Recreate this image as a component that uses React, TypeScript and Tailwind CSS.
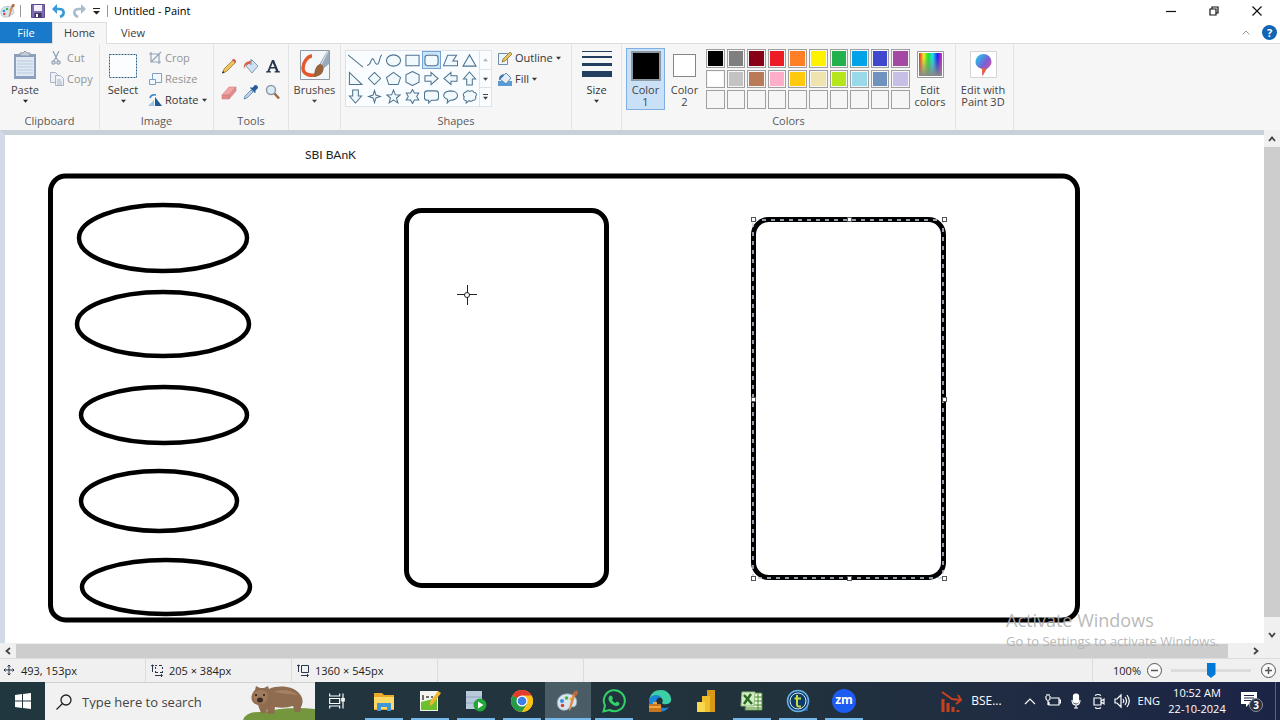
import type { ReactNode } from "react";
import clsx from "clsx";

const swatches = [
  "bg-black",
  "bg-[#7f7f7f]",
  "bg-[#880015]",
  "bg-[#ed1c24]",
  "bg-[#ff7f27]",
  "bg-[#fff200]",
  "bg-[#22b14c]",
  "bg-[#00a2e8]",
  "bg-[#3f48cc]",
  "bg-[#a349a4]",
  "bg-white",
  "bg-[#c3c3c3]",
  "bg-[#b97a57]",
  "bg-[#ffaec9]",
  "bg-[#ffc90e]",
  "bg-[#efe4b0]",
  "bg-[#b5e61d]",
  "bg-[#99d9ea]",
  "bg-[#7092be]",
  "bg-[#c8bfe7]",
];

const shapes = [
  { name: "Line", d: "M0 2l16 13" },
  { name: "Curve", d: "M0 13c4 1 4-7 6-7s2 7 5 6s2-9 5-10" },
  { name: "Oval", d: "M.5 8a7.500 6 0 1 0 15 0a7.500 6 0 1 0-15 0z" },
  { name: "Rectangle", d: "M1 2.500h14v11h-14z" },
  { name: "Rounded rectangle", d: "M4 2.500h8q3 0 3 3v5q0 3-3 3H4q-3 0-3-3v-5q0-3 3-3z" },
  { name: "Polygon", d: "M5 2.500h9.500l-4 6h5v5H.5z" },
  { name: "Triangle", d: "M8 2L15 14H1z" },
  { name: "Right triangle", d: "M1.500 1.500v13h13.500z" },
  { name: "Diamond", d: "M8 1.500L14.500 8L8 14.500L1.500 8z" },
  { name: "Pentagon", d: "M8 1.500L15.500 7l-2.500 7.500H3L.5 7z" },
  { name: "Hexagon", d: "M8 .5l7 3.500v8l-7 3.500L1 12V4z" },
  { name: "Right arrow", d: "M1 5h6.500V1.500L15 8l-7.500 6.500V11H1z" },
  { name: "Left arrow", d: "M15 5H8.500V1.500L1 8l7.500 6.500V11H15z" },
  { name: "Up arrow", d: "M5 15V8.500H1.500L8 1l6.500 7.500H11V15z" },
  { name: "Down arrow", d: "M5 1v6.500H1.500L8 15l6.500-7.500H11V1z" },
  { name: "Four-point star", d: "M8 1.500l1.500 5l5 1.500l-5 1.500l-1.500 5l-1.500-5l-5-1.500l5-1.500z" },
  { name: "Five-point star", d: "M8 1l2 5.200l5.200.2l-4 3.200l1.500 5.200L8 11.800l-4.700 3l1.500-5.200l-4-3.200L6 6.200z" },
  { name: "Six-point star", d: "M8 .5l2 3.700h4.700L12.500 8l2.200 3.800H10l-2 3.700l-2-3.700H1.300L3.500 8L1.300 4.200H6z" },
  { name: "Rounded callout", d: "M4 2h8.500q3 0 3 3v4q0 3-3 3H8l-3 3v-3H3.500q-3 0-3-3V5q0-3 3-3z" },
  { name: "Oval callout", d: "M4.500 15l.5-4C-1.500 9-.5 2.500 8 2c10 0 10 10 0 10q-2 1-3.500 3z" },
  { name: "Cloud callout", d: "M4 3.500c1-2 3-2 4-1c2-1 4-1 4.500 1c3 0 3.500 3 2 4.500c1 2-1 4.500-3 4c-1 1.500-3 1-4 0.500l-3 2.500v-2.500c-2.500 0-3.500-2.500-2-4c-2-1.500-1-5 1.500-5z" },
];

const ellipses = [
  { cx: 158, cy: 103, rx: 84, ry: 33 },
  { cx: 158, cy: 189, rx: 86, ry: 32 },
  { cx: 159, cy: 280, rx: 83, ry: 28 },
  { cx: 154, cy: 366, rx: 78, ry: 30 },
  { cx: 161, cy: 452, rx: 84, ry: 27 },
];

const handles = [
  [748, 85],
  [844, 85],
  [939, 85],
  [748, 265],
  [939, 265],
  [748, 444],
  [844, 444],
  [939, 444],
];

const Caret = ({ className }: { className?: string }) => (
  <svg viewBox="0 0 6 4" className={clsx("w-[5px] h-1 shrink-0", className)}>
    <path d="M0 .5h6L3 4z" fill="currentColor" />
  </svg>
);

const Palette = ({ className }: { className?: string }) => (
  <svg viewBox="0 0 24 24" className={className}>
    <path d="M1.500 16C0 9 6 4 13 5c7 1 9 7 7 11c-1 3-5 1-7 3c-1 3-10 4-11.500-3z" fill="#d7e6ee" stroke="#8ca9b8" strokeWidth="0.8" />
    <circle cx="6" cy="12" r="2" fill="#3a8fd8" />
    <circle cx="10.500" cy="9" r="1.800" fill="#4caf50" />
    <circle cx="15" cy="10" r="1.600" fill="#f2b52c" />
    <circle cx="6.500" cy="16.500" r="1.800" fill="#d9412f" />
    <path d="M20 4l-5 16l-2 2v-3l4-15z" fill="#d98a4e" />
    <path d="M17 5c0-3 3-4 5-3c0 3-1 5-3 5z" fill="#b9683a" />
  </svg>
);

const Group = ({ label, className, children }: { label?: string; className: string; children: ReactNode }) => (
  <section className={clsx("flex flex-col shrink-0 border-r border-[#e2e3e4]", className)}>
    <div className="flex flex-1 pt-1">{children}</div>
    <div className="h-[17px] leading-4 text-center text-[#5a5a5a]">{label}</div>
  </section>
);

const SmallButton = ({ label, icon, dim, caret }: { label: string; icon: ReactNode; dim?: boolean; caret?: boolean }) => (
  <button className={clsx("flex items-center gap-[3px] h-5 whitespace-nowrap", dim ? "text-[#939393]" : "text-[#333]")}>
    <svg viewBox="0 0 14 14" className="w-3.5 h-3.5 shrink-0">
      {icon}
    </svg>
    {label}
    {caret && <Caret />}
  </button>
);

const TitleBar = () => (
  <header className="flex items-center h-[22px] pr-0.5 text-black">
    <Palette className="w-4 h-4" />
    <span className="w-px h-3 ml-1 bg-[#999]" />
    <button aria-label="Save" className="ml-2.5">
      <svg viewBox="0 0 14 14" className="w-3.5 h-3.5">
        <path d="M.5.5h13v13H.5z" fill="#7f6bb0" stroke="#5e4c90" />
        <path d="M3 1h8v6H3z" fill="#f1eff8" />
        <path d="M3.500 9h7v4.500h-7z" fill="#3e3560" />
        <path d="M5 10h2v3H5z" fill="#fff" />
      </svg>
    </button>
    <button aria-label="Undo" className="ml-[7px]">
      <svg viewBox="0 0 14 14" className="w-3.5 h-3.5" fill="none">
        <path d="M2 5h5c6 0 6 6 1 8" stroke="#3a9ad9" strokeWidth="2.600" />
        <path d="M0 5l5-5v10z" fill="#3a9ad9" />
      </svg>
    </button>
    <button aria-label="Redo" className="ml-1.5">
      <svg viewBox="0 0 14 14" className="w-3.5 h-3.5" fill="none">
        <path d="M12 5H7c-6 0-6 6-1 8" stroke="#a9bccb" strokeWidth="2.600" />
        <path d="M14 5L9 0v10z" fill="#a9bccb" />
      </svg>
    </button>
    <button aria-label="Customize Quick Access Toolbar" className="ml-[7px]">
      <svg viewBox="0 0 7 7" className="w-[7px] h-[7px]">
        <path d="M0 0h7v1H0zM0 3h7L3.500 6.500z" fill="#222" />
      </svg>
    </button>
    <span className="w-px h-3 ml-[7px] bg-[#999]" />
    <h1 className="ml-1.5">Untitled - Paint</h1>
    <div className="flex ml-auto">
      {[
        ["Minimize", "M0 5.500h10"],
        ["Restore", "M1 3h6v6H1zM3 3V1h6v6H7"],
        ["Close", "M.500.500l9 9M9.500.500l-9 9"],
      ].map(([name, d]) => (
        <button key={name} aria-label={name} className="flex items-center justify-center w-[43px] h-5">
          <svg viewBox="0 0 10 10" className="w-2.5 h-2.5" fill="none" stroke="#111" strokeWidth="1.200">
            <path d={d} />
          </svg>
        </button>
      ))}
    </div>
  </header>
);

const Tabs = () => (
  <nav className="flex h-[22px] border-b border-[#dcdddf] text-[#3c3c3c]">
    <button className="w-[52px] h-[21px] bg-[#1979ca] text-white">File</button>
    <button className="w-[55px] h-[22px] pb-0.5 bg-[#f6f6f6] border-x border-t border-[#dcdddf]">Home</button>
    <button className="w-[52px] h-[21px]">View</button>
    <div className="flex items-center gap-3 ml-auto pr-[3px]">
      <button aria-label="Minimize the Ribbon">
        <svg viewBox="0 0 8 5" className="w-2 h-[5px]" fill="none" stroke="#999">
          <path d="M.5 4.500L4 1l3.500 3.500" />
        </svg>
      </button>
      <button aria-label="Help" className="w-[15px] h-[15px] rounded-full bg-[#1264b4] text-white font-bold leading-[15px]">
        ?
      </button>
    </div>
  </nav>
);

const toolIcons = [
  {
    name: "Pencil",
    art: (
      <>
        <path d="M1.500 15l1.500-4L12 2l2.500 2.500L5.500 13.500z" fill="#f0c25a" stroke="#96753a" strokeWidth="0.8" />
        <path d="M11 2l3 3l1-1q0-3-3-3z" fill="#d9534f" />
        <path d="M1 15.500l1-2.500l1.500 1.500z" fill="#222" />
      </>
    ),
  },
  {
    name: "Fill with color",
    art: (
      <>
        <path d="M3 8l6-6l6 6l-6 7z" fill="#cfe0f0" stroke="#7f9fc0" />
        <path d="M8 7V1" stroke="#5f87b0" />
        <path d="M8 3C4 3 0 5 1 11c1-4 3-5 6-5z" fill="#e0603c" />
      </>
    ),
  },
  {
    name: "Text",
    art: <path d="M1 14.500v-1l1.500-.5L7 2h2l4.500 11l1.500.5v1H9.500v-1l1.500-.5l-1-2.500H5.500L4.500 13l1.500.5v1zM6 9h3.500L7.700 4.800z" fill="#27364d" />,
  },
  {
    name: "Eraser",
    art: (
      <>
        <path d="M1 11l7-8h7l-7 8z" fill="#f3a5a5" stroke="#c98080" strokeWidth="0.600" />
        <path d="M1 11h7v4H1zM8 11l7-8v4l-7 8z" fill="#e58a8a" stroke="#c98080" strokeWidth="0.600" />
      </>
    ),
  },
  {
    name: "Color picker",
    art: (
      <>
        <path d="M1 15l1-3l6-6l2 2l-6 6z" fill="#b7d4ea" stroke="#5b82a6" strokeWidth="0.8" />
        <path d="M7 4l5 5l1-1l-1-1l3-3q0-3-3-3L9 4L8 3z" fill="#245b9c" />
      </>
    ),
  },
  {
    name: "Magnifier",
    art: (
      <>
        <path d="M9.500 9.500L14 14.500" stroke="#9b6a43" strokeWidth="2.500" />
        <circle cx="6" cy="6" r="4.500" fill="#dcebf5" stroke="#8e9aa5" strokeWidth="1.500" />
      </>
    ),
  },
];

const Ribbon = () => (
  <div className="flex h-[86px] bg-[#f6f6f6] text-[#444]">
    <Group label="Clipboard" className="w-[100px]">
      <button className="flex flex-col items-center w-[50px]">
        <svg viewBox="0 0 24 30" className="w-6 h-[30px] mt-0.5">
          <path d="M1 4h22v25H1z" fill="#8ba0bd" />
          <path d="M3 7h18v19H3z" fill="#dfe8f3" />
          <path d="M4 11h16M4 14h16M4 17h16M4 20h16M4 23h16" stroke="#b9cade" />
          <path d="M7 6V3h3l2-2l2 2h3v3z" fill="#c7d0da" stroke="#8595a8" />
        </svg>
        <span className="mt-[3px] mb-0.5">Paste</span>
        <Caret className="text-[#222]" />
      </button>
      <div className="flex flex-col gap-px">
        <SmallButton
          dim
          label="Cut"
          icon={<path d="M3 0l4 8l2 3M9 0L5 8l-2 3M2 12a1.500 1.500 0 1 0 3-1a1.500 1.500 0 1 0-3 1M7 12a1.500 1.500 0 1 0 3-1a1.500 1.500 0 1 0-3 1" fill="none" stroke="#94a3b8" strokeWidth="1.300" />}
        />
        <SmallButton
          dim
          label="Copy"
          icon={
            <g fill="#eef2f7" stroke="#a8b4c6">
              <path d="M.5.500h5l2 2v8h-7z" />
              <path d="M5.500 3.500h5l3 3v7h-8zM7 8h4M7 10h5M7 12h5" />
            </g>
          }
        />
      </div>
    </Group>

    <Group label="Image" className="w-[114px] text-[#333]">
      <button className="flex flex-col items-center w-[46px]">
        <svg viewBox="0 0 28 24" className="w-7 h-6 mt-1.5">
          <path d="M.5.500h27v23H.5z" fill="#fcfdff" stroke="#2f6288" strokeDasharray="2 1" />
        </svg>
        <span className="mt-[5px] mb-0.5">Select</span>
        <Caret />
      </button>
      <div className="flex flex-col gap-px ml-0.5">
        <SmallButton dim label="Crop" icon={<path d="M3 1v10h10M1 3h10v10M3 11L13 1" fill="none" stroke="#94a3b8" strokeWidth="1.200" />} />
        <SmallButton
          dim
          label="Resize"
          icon={
            <g fill="#f2f7fc" stroke="#7f9fc4">
              <path d="M4.500 1.500h9v9h-9z" />
              <path d="M1.500 7.500h6v5h-6z" />
            </g>
          }
        />
        <SmallButton
          caret
          label="Rotate"
          icon={
            <>
              <path d="M0 13h6V7z" fill="#9cc5e4" />
              <path d="M7 13V4l7 9z" fill="#1e5a94" />
              <path d="M2 5q1-4 6-3" fill="none" stroke="#3b86c6" strokeWidth="1.500" />
            </>
          }
        />
      </div>
    </Group>

    <Group label="Tools" className="w-[75px]">
      <div className="grid grid-cols-3 gap-x-1.5 gap-y-2.5 content-start pl-[7px] pt-2.5">
        {toolIcons.map((tool) => (
          <button key={tool.name} aria-label={tool.name} className="w-4 h-4">
            <svg viewBox="0 0 16 16" className="w-4 h-4">
              {tool.art}
            </svg>
          </button>
        ))}
      </div>
    </Group>

    <Group className="w-[52px]">
      <button className="flex flex-col items-center w-full">
        <svg viewBox="0 0 30 30" className="w-[30px] h-[30px] mt-0.5">
          <path d="M.5.500h29v29H.5z" fill="#f4f7fa" stroke="#8e9aa8" />
          <path d="M12 6C8 6 3 12 3 18c0 7 8 8 13 7" fill="none" stroke="#e2592d" strokeWidth="3.500" />
          <path d="M29 1v13l-6 5l-4-4L27 1z" fill="#9aaabb" />
          <path d="M28 1l-7 14" stroke="#e4ebf2" />
          <path d="M23 16c2 6-2 10-9 11c0-6 2-13 7-13z" fill="#97643d" />
        </svg>
        <span className="mt-[3px] mb-0.5">Brushes</span>
        <Caret />
      </button>
    </Group>

    <Group label="Shapes" className="w-[231px]">
      <div className="flex h-[57px] mt-0.5 ml-1 border border-[#dfe3e8] bg-[#fafdff]">
        <div className="grid grid-cols-7 w-[133px]">
          {shapes.map((shape, i) => (
            <button
              key={shape.name}
              aria-label={shape.name}
              className={clsx("flex items-center justify-center border", i === 4 ? "border-[#6fa4dc] bg-[#cfe3f7]" : "border-transparent")}
            >
              <svg viewBox="0 0 16 16" className="w-[15px] h-[15px]" fill="#f2f9fd" stroke="#4d738e" strokeWidth="1.100">
                <path d={shape.d} fill={i < 2 ? "none" : undefined} />
              </svg>
            </button>
          ))}
        </div>
        <div className="flex flex-col w-3 border-l border-[#dfe3e8] divide-y divide-[#dfe3e8]">
          <button aria-label="Scroll up" className="flex flex-1 items-center justify-center text-[#b5b5b5]">
            <Caret className="rotate-180" />
          </button>
          <button aria-label="Scroll down" className="flex flex-1 items-center justify-center">
            <Caret />
          </button>
          <button aria-label="More shapes" className="flex flex-col flex-1 items-center justify-center gap-px">
            <span className="w-[5px] h-px bg-[#444]" />
            <Caret />
          </button>
        </div>
      </div>
      <div className="flex flex-col gap-px ml-1.5 text-[#333]">
        <SmallButton
          caret
          label="Outline"
          icon={
            <>
              <path d="M.5 2.500h9v11h-9z" fill="#eef5fb" stroke="#6c8dad" />
              <path d="M4 11l1-3l7-7l2 2l-7 7z" fill="#e9c35c" stroke="#8c733c" strokeWidth="0.8" />
            </>
          }
        />
        <SmallButton
          caret
          label="Fill"
          icon={
            <>
              <path d="M0 9h14v5H0z" fill="#5b9bd5" />
              <path d="M2 7l6-6l5 5l-5 6z" fill="#e3edf6" stroke="#5f87b0" />
              <path d="M6 2Q0 3 1 9q1-3 4-4z" fill="#3c78b4" />
            </>
          }
        />
      </div>
    </Group>

    <Group className="w-[50px] text-[#333]">
      <button className="flex flex-col items-center w-full">
        <svg viewBox="0 0 30 26" className="w-[30px] h-[26px] mt-[3px]">
          <path d="M0 0h30v1H0zM0 5h30v2H0zM0 12h30v3H0zM0 20h30v6H0z" fill="#233f5f" />
        </svg>
        <span className="mt-1.5 mb-0.5">Size</span>
        <Caret />
      </button>
    </Group>

    <Group label="Colors" className="w-[334px]">
      <button className="flex flex-col items-center w-[39px] h-[62px] ml-1 pt-0.5 border border-[#7fb0e4] bg-[#c9e0f7] leading-3">
        <span className="w-[30px] h-[30px] mb-[3px] border-2 border-[#8d98a5] bg-black" />
        Color
        <br />1
      </button>
      <button className="flex flex-col items-center w-[39px] h-[62px] pt-1.5 leading-3">
        <span className="w-[23px] h-[23px] mb-[7px] border border-[#868686] bg-white" />
        Color
        <br />2
      </button>
      <div className="grid grid-cols-10 grid-rows-3 gap-0.5 w-[204px] h-[60px] mt-px ml-0.5">
        {Array.from({ length: 30 }, (_, i) => (
          <button key={i} aria-label={`Color ${i + 1}`} className="border border-[#a0a0a0] p-px">
            <span className={clsx("block w-full h-full", swatches[i])} />
          </button>
        ))}
      </div>
      <button className="flex flex-col items-center w-10 pt-[3px] leading-3">
        <svg viewBox="0 0 27 27" className="w-[27px] h-[27px] mb-1.5">
          <defs>
            <linearGradient id="hue">
              <stop offset="0" stopColor="#e22" />
              <stop offset="0.200" stopColor="#ee2" />
              <stop offset="0.400" stopColor="#2d3" />
              <stop offset="0.600" stopColor="#2de" />
              <stop offset="0.800" stopColor="#22e" />
              <stop offset="1" stopColor="#e2b" />
            </linearGradient>
            <linearGradient id="fade" x2="0" y2="1">
              <stop offset="0.200" stopColor="#888" stopOpacity="0" />
              <stop offset="1" stopColor="#888" />
            </linearGradient>
          </defs>
          <path d="M.5.500h26v26H.5z" fill="#fff" stroke="#999" />
          <path d="M2 2h23v23H2z" fill="url(#hue)" />
          <path d="M2 2h23v23H2z" fill="url(#fade)" />
        </svg>
        Edit
        <br />
        colors
      </button>
    </Group>

    <Group className="w-[58px]">
      <button className="flex flex-col items-center w-[54px] pt-[3px] leading-3 whitespace-nowrap">
        <svg viewBox="0 0 27 27" className="w-[27px] h-[27px] mb-1.5">
          <defs>
            <linearGradient id="drop" x2="1" y2="1">
              <stop offset="0.100" stopColor="#25c3ee" />
              <stop offset="0.500" stopColor="#7a5fd6" />
              <stop offset="0.900" stopColor="#f0508c" />
            </linearGradient>
          </defs>
          <path d="M.5.500h26v26H.5z" fill="#fff" stroke="#d4d4d4" />
          <path d="M13.500 3a8 8 0 0 1 8 8c0 5-5 6-6 9l-3 5l-.5-7c-3-1-6.500-3-6.500-7a8 8 0 0 1 8-8z" fill="url(#drop)" />
          <path d="M12 17l4 1l-3.500 7z" fill="#f0642d" />
        </svg>
        Edit with
        <br />
        Paint 3D
      </button>
    </Group>
  </div>
);

const Arrow = ({ label, turn }: { label: string; turn?: string }) => (
  <button aria-label={label} className="flex items-center justify-center w-4 h-4 shrink-0">
    <svg viewBox="0 0 8 8" className={clsx("w-2 h-2", turn)} fill="none" stroke="#444" strokeWidth="1.800">
      <path d="M1 6l3-3.500L7 6" />
    </svg>
  </button>
);

const Canvas = () => (
  <main className="flex flex-1 min-h-0">
    <div className="flex flex-1 min-w-0 border-t-[5px] border-l-[5px] border-t-[#c8d0da] border-l-[#d3d9e9]">
      <div className="relative flex-1 overflow-hidden bg-white">
        <svg className="w-full h-full" fill="none" stroke="#000" strokeWidth="5">
          <rect x="45.500" y="41" width="1027" height="444" rx="15" />
          {ellipses.map((e) => (
            <ellipse key={e.cy} {...e} strokeWidth="4.500" />
          ))}
          <rect x="401.500" y="75.500" width="200" height="375" rx="15" />
          <rect x="748.500" y="84.500" width="190" height="358" rx="15" />
          <rect x="748" y="85" width="190" height="358" stroke="#c3cfe2" strokeWidth="1.500" strokeDasharray="4 5" />
          {handles.map(([x, y]) => (
            <rect key={`${x}-${y}`} x={x - 1.5} y={y - 2.5} width="4" height="4" fill="#fff" stroke="#555" strokeWidth="1" />
          ))}
          <g stroke="#222" strokeWidth="1">
            <path d="M462.500 150v8M462.500 162v8M452 159.500h8M464 159.500h8" />
            <circle cx="462" cy="160" r="2.500" />
          </g>
        </svg>
        <span className="absolute left-[300px] top-3 leading-4 text-xs text-[#222] font-['Lato',sans-serif]">SBI BAnK</span>
      </div>
    </div>
    <div className="flex flex-col w-4 pt-px bg-[#f0f0f0]">
      <Arrow label="Scroll up" />
      <div className="flex-1 bg-[#cdcdcd]" />
      <div className="flex items-end h-[26px]">
        <Arrow label="Scroll down" turn="rotate-180" />
      </div>
    </div>
  </main>
);

const StatusBar = () => (
  <footer className="flex h-6 border-t border-[#dcdcdc] bg-[#f0f0f0] text-[#222]">
    {[
      ["493, 153px", "M6 1v10M1 6h10M4.500 2.500L6 1l1.500 1.500M4.500 9.500L6 11l1.500-1.500M2.500 4.500L1 6l1.500 1.500M9.500 4.500L11 6L9.500 7.500"],
      ["205 × 384px", "M1.500 1v7M0 2l1.500-1L3 2M4 1.500h2M8 1.500h3M4.500 3v2M4.500 7v2M11.500 3v2M11.500 7v2M5 8.500h2M9 8.500h2M4 11.500h7M10 10l1.500 1.500L10 13"],
      ["1360 × 545px", "M1.500 1v7M0 2l1.500-1L3 2M4.500 1.500h7v7h-7zM4 11.500h7M10 10l1.500 1.500L10 13"],
      ["", ""],
    ].map(([text, d], i) => (
      <div key={i} className={clsx("flex items-center w-[146px] border-r border-[#dcdcdc]", i === 0 ? "gap-1.5 pl-[3px]" : "gap-1.5 pl-[5px]")}>
        <svg viewBox="0 0 12 13" className="w-3 h-[13px]" fill="none" stroke="#27364d">
          <path d={d} />
        </svg>
        {text}
      </div>
    ))}
    <div className="flex items-center ml-auto pl-5 pr-1 border-l border-[#dcdcdc]">
      <label htmlFor="zoom">100%</label>
      <button aria-label="Zoom out" className="ml-1.5">
        <svg viewBox="0 0 15 15" className="w-[15px] h-[15px]" fill="#fafafa" stroke="#555">
          <circle cx="7.500" cy="7.500" r="7" />
          <path d="M4 7.500h7" strokeWidth="1.500" />
        </svg>
      </button>
      <input
        id="zoom"
        type="range"
        defaultValue="50"
        className="w-20 h-4 mx-[9px] appearance-none bg-transparent [&::-webkit-slider-runnable-track]:h-[3px] [&::-webkit-slider-runnable-track]:bg-[#dcdcdc] [&::-webkit-slider-thumb]:appearance-none [&::-webkit-slider-thumb]:w-[9px] [&::-webkit-slider-thumb]:h-[15px] [&::-webkit-slider-thumb]:-mt-1.5 [&::-webkit-slider-thumb]:bg-[#0078d7] [&::-webkit-slider-thumb]:[clip-path:polygon(0_0,100%_0,100%_75%,50%_100%,0_75%)]"
      />
      <button aria-label="Zoom in" className="ml-px">
        <svg viewBox="0 0 15 15" className="w-[15px] h-[15px]" fill="#fafafa" stroke="#555">
          <circle cx="7.500" cy="7.500" r="7" />
          <path d="M4 7.500h7M7.500 4v7" strokeWidth="1.500" />
        </svg>
      </button>
    </div>
  </footer>
);

const taskIcons = [
  {
    name: "Task View",
    art: <path d="M2 3v3h12V3M2 21v-3h12v3M2 9h12v6H2zM18 3v18M16.500 9h3v3h-3z" fill="none" stroke="#fff" strokeWidth="1.400" />,
  },
  {
    name: "File Explorer",
    line: true,
    art: (
      <>
        <path d="M2 4h8l2 2h10v15H2z" fill="#e9a92b" />
        <path d="M2 8h20v12H2z" fill="#ffd866" />
        <path d="M5 22v-8h14v8h-4v-4H9v4z" fill="#3f97d8" />
      </>
    ),
  },
  {
    name: "Notepad++",
    line: true,
    art: (
      <>
        <path d="M2 2h18v20H2z" fill="#f4f4ee" />
        <path d="M3 13l16-4v12H3z" fill="#6cbf2d" />
        <path d="M5 6v5M8 8h3M13 8h2" stroke="#444" strokeWidth="1.500" />
        <path d="M12 13l8-11l3 2l-8 11l-3 2z" fill="#f0b734" />
      </>
    ),
  },
  {
    name: "Server Manager",
    line: true,
    art: (
      <>
        <path d="M2 2h16v18H2z" fill="#b9c9dc" />
        <path d="M2 8h16M2 14h16" stroke="#8ea4bf" strokeWidth="1" />
        <circle cx="16" cy="16" r="6.500" fill="#21a637" />
        <path d="M14 12.500v7l5.500-3.500z" fill="#fff" />
      </>
    ),
  },
  {
    name: "Google Chrome",
    line: true,
    art: (
      <>
        <circle cx="12" cy="12" r="11" fill="#fbc116" />
        <path d="M12 12L2.500 6.500A11 11 0 0 1 21.500 6.500z" fill="#e33b2e" />
        <path d="M12 12L2.500 6.500A11 11 0 0 0 12 23l5-8z" fill="#269a49" />
        <path d="M12 6.500h9.500A11 11 0 0 1 12 23l5-8z" fill="#fbc116" />
        <circle cx="12" cy="12" r="5.500" fill="#fff" />
        <circle cx="12" cy="12" r="4.300" fill="#3c7de6" />
      </>
    ),
  },
  { name: "Paint", line: true, active: true },
  {
    name: "WhatsApp",
    line: true,
    art: (
      <>
        <path d="M1.500 22.500l1.500-6A10.500 10.500 0 1 1 7.500 21z" fill="none" stroke="#2fd267" strokeWidth="2" />
        <path d="M8 6.500l2 .500l1 2.500l-1 1.500q1 2 3.500 3l1.500-1.500l2.500 1.500q0 3-3 3C10 16.500 6 12 6.500 9q.5-2 1.500-2.500z" fill="#2fd267" />
      </>
    ),
  },
  {
    name: "Microsoft Edge",
    art: (
      <>
        <path d="M1 12C2 4 7 1 13 1c7 0 11 6 10 11c-1 4-8 4-9 2c2-3 0-6-4-6c-5 0-9 4-9 4z" fill="#3ccfa6" />
        <path d="M1 12c0-6 9-8 12-4c-4 0-6 4-4 7c2 4 8 5 12 3c-3 5-10 6-15 3c-3-2-5-5-5-9z" fill="#1d86d8" />
        <path d="M1 15h12v8H1z" fill="#c9741f" />
        <path d="M1 17h12v2H1zM5 13h4v2H5z" fill="#f2a53a" />
      </>
    ),
  },
  {
    name: "Power BI",
    art: (
      <>
        <path d="M13 1h8v22h-8z" fill="#d99b17" />
        <path d="M8 7h8v16H8z" fill="#f0bd2b" />
        <path d="M3 13h8v10H3z" fill="#f7d650" />
      </>
    ),
  },
  {
    name: "Excel",
    line: true,
    art: (
      <>
        <path d="M7 4h15v17H5z" fill="#eaf5df" stroke="#4b8a34" />
        <path d="M14 8h8M14 12h8M14 16h8M5 19h16M18 5v16" stroke="#4b8a34" />
        <path d="M2 3h13l-1 14H1z" fill="#d6ecc4" stroke="#8fbf78" />
        <path d="M4 6l8 9M11 5l-7 10" stroke="#286b24" strokeWidth="2.500" />
      </>
    ),
  },
  {
    name: "TeamLogger",
    line: true,
    art: (
      <>
        <path d="M12 12h10v10H12z" fill="#1762a8" />
        <circle cx="12" cy="12" r="10.500" fill="#0d3a68" stroke="#68b3e4" strokeWidth="1.500" />
        <circle cx="12" cy="12" r="8" fill="none" stroke="#dcebf5" />
        <path d="M11 6v10q0 2 4 1.500M8.500 9.500H15" fill="none" stroke="#c8dc40" strokeWidth="2" />
      </>
    ),
  },
  { name: "Zoom", line: true },
];

const TaskBar = () => (
  <div className="flex h-[38px] bg-linear-to-r from-[#21373f] via-[#22323d] via-60% to-[#1c2446] text-white">
    <button aria-label="Start" className="flex items-center justify-center w-[45px]">
      <svg viewBox="0 0 16 16" className="w-4 h-4" fill="#fff">
        <path d="M0 2l7-1v6.500H0zM8 1l8-1v7.500H8zM0 8.500h7V15l-7-1zM8 8.500h8V16l-8-1z" />
      </svg>
    </button>
    <div className="flex items-center w-[270px] pl-[11px] bg-[#f1f1f1] border-t border-[#d0d0d0]">
      <svg viewBox="0 0 16 16" className="w-4 h-4 shrink-0" fill="none" stroke="#222" strokeWidth="1.300">
        <circle cx="10" cy="6" r="5" />
        <path d="M6.500 9.500L.5 15.500" />
      </svg>
      <input
        aria-label="Search"
        placeholder="Type here to search"
        className="flex-1 min-w-0 ml-2.5 text-[13px] outline-none placeholder:text-[#444] placeholder:opacity-100"
      />
      <svg viewBox="0 0 72 36" className="w-[72px] h-9 mt-px shrink-0">
        <path d="M0 36Q3 27 20 28Q45 22 72 25V36z" fill="#74963d" />
        <path d="M12 6l1-4l4 2h4l4-2l1 3c9-4 22-3 29 3c6 6 5 11 3 15l-1 5h-5l-2-6q-9 3-18 1l-1 7h-6l-1-5l-1 4h-5l-3-8c-6-1-9-7-4-14z" fill="#8f6b50" />
        <path d="M30 8q14-5 25 3q-13-1-25-3z" fill="#a58062" />
        <path d="M12 8q6-4 12 0q2 7-2 11q-8 2-11-3q-1-4 1-8z" fill="#a07a5d" />
        <ellipse cx="17" cy="16" rx="3" ry="2.500" fill="#3a2a25" />
        <circle cx="13" cy="11" r="1" fill="#221915" />
        <circle cx="21" cy="11" r="1" fill="#221915" />
      </svg>
    </div>
    {taskIcons.map((task) => (
      <button
        key={task.name}
        aria-label={task.name}
        className={clsx("flex flex-col items-center w-[46px] pt-[7px]", task.active && "bg-[#4a5d66]")}
      >
        {task.name === "Zoom" ? (
          <span className="w-6 h-6 rounded-full bg-[#1d5cf0] text-xs font-bold leading-[22px]">zm</span>
        ) : task.active ? (
          <Palette className="w-6 h-6" />
        ) : (
          <svg viewBox="0 0 24 24" className={clsx("h-6", task.name === "Task View" ? "w-5" : "w-6")}>
            {task.art}
          </svg>
        )}
        {task.line && <span className={clsx("h-0.5 mt-auto bg-[#76b9ed]", task.active ? "w-full" : "w-[38px]")} />}
      </button>
    ))}
    <div className="flex items-center ml-auto text-xs">
      <button className="flex items-center gap-2">
        <svg viewBox="0 0 22 22" className="w-[22px] h-[22px]" fill="none" stroke="#c9401f" strokeWidth="2.500">
          <path d="M1 2l10 7l8 1M15 14l5-4l-3-5" strokeWidth="2" />
          <path d="M2 9v13M7 13v9M12 17v5M17 20v2" strokeWidth="3" />
        </svg>
        BSE...
      </button>
      <div className="flex items-center gap-[7px] ml-5">
        {[
          ["Show hidden icons", "M3 11l5-5l5 5"],
          ["Battery", "M6 5h8v7H4V9M14 7h1.500v3H14M1 3v3q2 3 4 0V3M2 3V1M4 3V1M3 8v4"],
          ["Microphone", "M4 7q0 5 4 5t4-5M8 12v3M6 15h4"],
          ["Meet Now", "M3 5h7v7H3zM10 8l3-2v5l-3-2M4 2.500q3-2 6 0M4 14.500q3 2 6 0"],
          ["Volume", "M1 6h2l4-4v12L3 10H1zM9 6q1.500 2 0 4M11 4q3 4 0 8M13 2q4.500 6 0 12"],
        ].map(([name, d]) => (
          <button key={name} aria-label={name}>
            <svg viewBox="0 0 16 16" className="w-4 h-4" fill="none" stroke="#fff" strokeWidth="1.200">
              <path d={d} />
              {name === "Microphone" && <rect x="5.500" y="1" width="5" height="9" rx="2" fill="#fff" />}
            </svg>
          </button>
        ))}
      </div>
      <span className="ml-2 text-[11px]">ENG</span>
      <time className="w-[58px] ml-2 text-center text-[11px] leading-4 whitespace-nowrap">
        10:52 AM
        <br />
        22-10-2024
      </time>
      <button aria-label="Notifications" className="relative ml-[15px] mr-3 pr-1.5 pb-0.5">
        <svg viewBox="0 0 16 16" className="w-4 h-4">
          <path d="M0 0h16v12H8l-3 3v-3H0z" fill="#fff" />
          <path d="M3 3.500h10M3 6h10M3 8.500h7" stroke="#1c2446" />
        </svg>
        <span className="absolute left-2 top-1.5 w-3.5 h-3.5 rounded-full border border-[#8a8f9c] bg-[#2b3040] text-[10px] font-bold leading-3">3</span>
      </button>
      <span className="w-px h-[38px] mr-1 bg-[#5a617a]" />
    </div>
  </div>
);

const App = () => {
  return (
    <div className="relative flex flex-col h-screen overflow-hidden bg-white text-[11px] leading-[14px] font-['Open_Sans','Noto_Sans',sans-serif]">
      <TitleBar />
      <Tabs />
      <Ribbon />
      <Canvas />
      <div className="flex items-center h-[15px] bg-[#f0f0f0]">
        <Arrow label="Scroll left" turn="-rotate-90" />
        <div className="flex-1 h-3.5 bg-[#cdcdcd]" />
        <div className="flex justify-end w-[52px] pr-4">
          <Arrow label="Scroll right" turn="rotate-90" />
        </div>
      </div>
      <StatusBar />
      <TaskBar />
      <div className="absolute right-[54px] bottom-[70px] w-[220px] text-[#b0b0b0]/90 whitespace-nowrap pointer-events-none">
        <p className="text-lg leading-6">Activate Windows</p>
        <p className="text-[13px] leading-[18px]">Go to Settings to activate Windows.</p>
      </div>
    </div>
  );
};

export default App;
